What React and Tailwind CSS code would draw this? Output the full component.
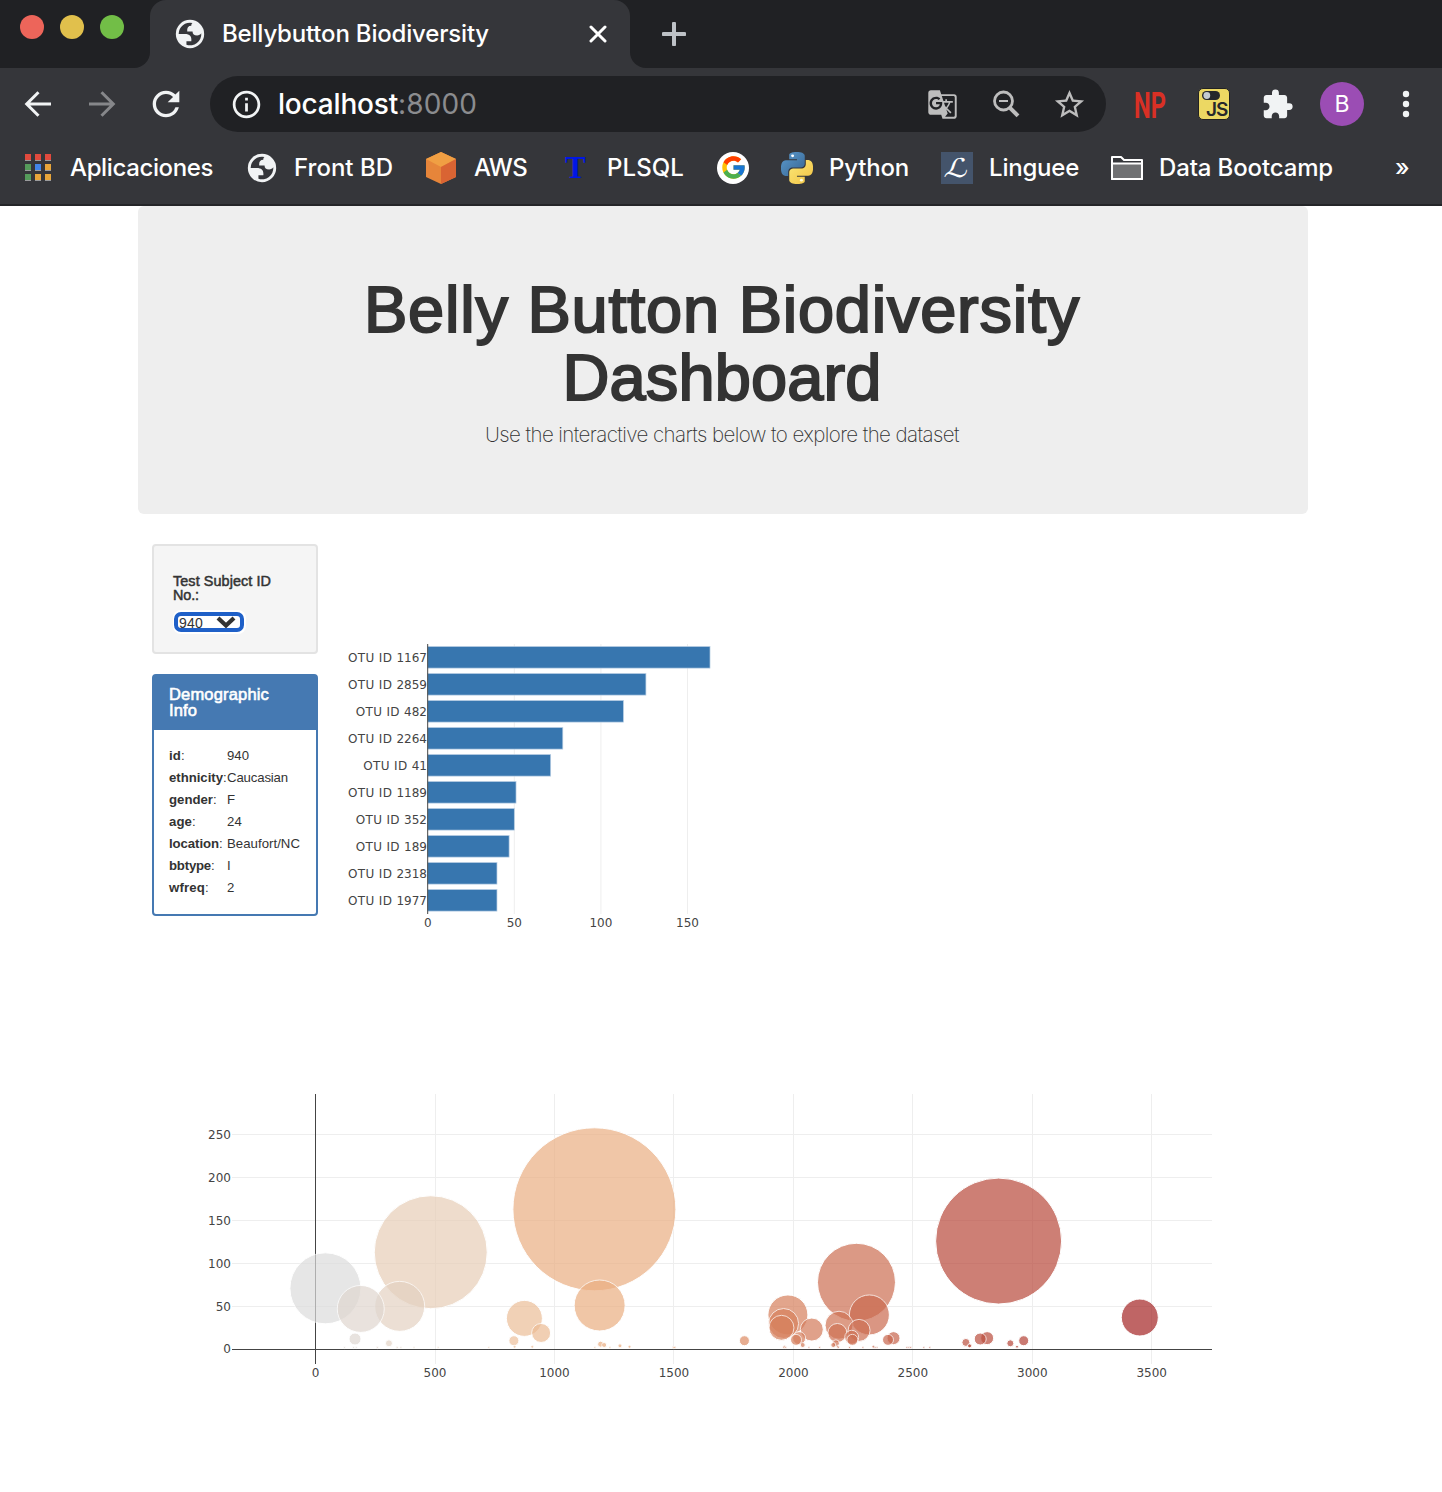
import React, { useLayoutEffect, useRef } from "react";
import {
  MdGTranslate,
  MdStarBorder,
  MdExtension,
  MdRefresh,
  MdInfoOutline,
} from "react-icons/md";
import { FcGoogle } from "react-icons/fc";

/* Text whose tracking is adjusted so that it fills the given width. */
function Fit({ w, className = "", children }) {
  const ref = useRef(null);
  useLayoutEffect(() => {
    const el = ref.current;
    el.style.letterSpacing = "0px";
    const natural = el.getBoundingClientRect().width;
    el.style.letterSpacing = (w - natural) / String(children).length + "px";
  }, [w, children]);
  return (
    <span ref={ref} className={"inline-block whitespace-nowrap " + className}>
      {children}
    </span>
  );
}

function Globe() {
  return (
    <svg width="34" height="34" viewBox="0 0 24 24" className="shrink-0">
      <circle cx="12" cy="12" r="10" fill="#f1f3f4" />
      <path
        d="M4 12h4.4c3.407.022 4.922 1.73 4.543 5.127H9.488v2.47a8.004 8.004 0 0 0 10.498-8.083C19.327 12.504 18.332 13 17 13c-2.137 0-3.206-.916-3.206-2.75h-3.748c-.274-2.728.683-4.092 2.87-4.092 0-.975.327-1.597.811-1.97A8.004 8.004 0 0 0 4 12z"
        fill="#35363a"
      />
    </svg>
  );
}

function TabStrip() {
  return (
    <div className="flex h-[68px] bg-[#35363a]">
      <div className="flex w-[150px] gap-4 rounded-br-2xl bg-[#202124] pl-5 pt-[15px]">
        <span className="size-6 rounded-full bg-[#ed655a]" />
        <span className="size-6 rounded-full bg-[#e1c04c]" />
        <span className="size-6 rounded-full bg-[#72be47]" />
      </div>
      <div className="w-[480px] bg-[linear-gradient(#202124_50%,#35363a_50%)]">
        <div className="flex h-full items-center rounded-t-2xl bg-[#35363a] pl-[23px]">
          <Globe />
          <Fit w={267} className="ml-[15px] text-[24px] font-medium text-white">
            Bellybutton Biodiversity
          </Fit>
          <svg width="18" height="18" viewBox="0 0 18 18" className="ml-[100px]">
            <path d="M2 2L16 16M16 2L2 16" stroke="#fff" strokeWidth="3" strokeLinecap="round" />
          </svg>
        </div>
      </div>
      <div className="flex flex-1 items-center rounded-bl-2xl bg-[#202124] pl-8">
        <svg width="24" height="24" viewBox="0 0 24 24">
          <path d="M12 1.5V22.5M1.5 12H22.5" stroke="#bdc1c6" strokeWidth="4" strokeLinecap="round" />
        </svg>
      </div>
    </div>
  );
}

function Toolbar() {
  return (
    <div className="flex h-[72px] items-center bg-[#35363a]">
      <svg width="28" height="28" viewBox="0 0 28 28" className="ml-6" fill="none" stroke="#f1f3f4" strokeWidth="3">
        <path d="M27 14H3M14.5 2.2L2.7 14L14.5 25.8" />
      </svg>
      <svg width="28" height="28" viewBox="0 0 28 28" className="ml-9" fill="none" stroke="#86878a" strokeWidth="3">
        <path d="M1 14H25M13.5 2.2L25.3 14L13.5 25.8" />
      </svg>
      <MdRefresh className="ml-[30px] size-10 text-[#f1f3f4]" />
      <div className="ml-6 flex h-14 w-[896px] items-center rounded-full bg-[#202124] pl-5">
        <MdInfoOutline className="size-[33px] text-[#f1f3f4]" />
        <Fit w={120} className="ml-[15px] text-[28px] font-medium leading-8 text-white">localhost</Fit>
        <Fit w={79} className="text-[28px] leading-8 text-[#8b8c8f]">:8000</Fit>
        <MdGTranslate className="ml-[450px] size-[31px] text-[#bdbdbd]" />
        <svg width="28" height="28" viewBox="0 0 28 28" className="ml-[34px]" fill="none" stroke="#bdbdbd">
          <circle cx="11.5" cy="11" r="9" strokeWidth="2.8" />
          <path d="M18 17.8L26 25.8" strokeWidth="4" />
          <path d="M7 11H16" strokeWidth="2" />
        </svg>
        <MdStarBorder className="ml-[32px] size-[35px] text-[#bdbdbd]" />
      </div>
      <span className="ml-[28px] flex w-8 justify-center">
        <span className="translate-y-px scale-x-[.64] font-['Roboto'] text-[37px] font-bold leading-none text-[#d93025]">NP</span>
      </span>
      <div className="ml-8 flex h-8 w-8 flex-col rounded-[5px] border border-[#222] bg-[#ecd863] pl-[3px] pt-[2px]">
        <svg width="18" height="9" viewBox="0 0 18 9" className="shrink-0">
          <rect width="18" height="9" rx="4.5" fill="#26282b" />
          <circle cx="4.8" cy="4.5" r="3.4" fill="#c4cbd0" />
        </svg>
        <span className="pl-[4px] text-[19px] font-semibold leading-[19px] tracking-[-1px] text-[#26282b]">JS</span>
      </div>
      <MdExtension className="ml-[31px] size-[33px] text-[#f1f3f4]" />
      <span className="ml-[26px] flex size-11 items-center justify-center rounded-full bg-[#9b4db4] text-[23px] text-white">
        B
      </span>
      <svg width="8" height="28" viewBox="0 0 8 28" className="ml-[38px] fill-[#f1f3f4]">
        <circle cx="4" cy="4" r="3.2" />
        <circle cx="4" cy="14" r="3.2" />
        <circle cx="4" cy="24" r="3.2" />
      </svg>
    </div>
  );
}

const SNAKE =
  "M14.25.18l.9.2.73.26.59.3.45.32.34.34.25.34.16.33.1.3.04.26.02.2-.01.13V8.5l-.05.63-.13.55-.21.46-.26.38-.3.31-.33.25-.35.19-.35.14-.33.1-.3.07-.26.04-.21.02H8.77l-.69.05-.59.14-.5.22-.41.27-.33.32-.27.35-.2.36-.15.37-.1.35-.07.32-.04.27-.02.21v3.06H3.17l-.21-.03-.28-.07-.32-.12-.35-.18-.36-.26-.36-.36-.35-.46-.32-.59-.28-.73-.21-.88-.14-1.05-.05-1.23.06-1.22.16-1.04.24-.87.32-.71.36-.57.4-.44.42-.33.42-.24.4-.16.36-.1.32-.05.24-.01h.16l.06.01h8.16v-.83H6.18l-.01-2.75-.02-.37.05-.34.11-.31.17-.28.25-.26.31-.23.38-.2.44-.18.51-.15.58-.12.64-.1.71-.06.77-.04.84-.02 1.27.05z";

function PythonLogo() {
  return (
    <svg width="32" height="32" viewBox="0 0 24 24">
      <defs>
        <linearGradient id="pyBlue" x1="0" y1="0" x2="1" y2="1">
          <stop offset="0" stopColor="#5b9bd0" />
          <stop offset="1" stopColor="#37648f" />
        </linearGradient>
        <linearGradient id="pyYellow" x1="1" y1="1" x2="0" y2="0">
          <stop offset="0" stopColor="#fbe878" />
          <stop offset="1" stopColor="#f2c343" />
        </linearGradient>
      </defs>
      <path d={SNAKE} fill="url(#pyBlue)" />
      <path d={SNAKE} fill="url(#pyYellow)" transform="rotate(180 12 12)" />
      <circle cx="8.7" cy="2.9" r="1.1" fill="#fff" />
      <circle cx="15.3" cy="21.1" r="1.1" fill="#fffbe0" />
    </svg>
  );
}

const APP_TILES = [
  "#e14a3d", "#e14a3d", "#e14a3d",
  "#559b5b", "#4285e8", "#e8a53a",
  "#559b5b", "#e8a53a", "#e8a53a",
];

function Bookmarks() {
  return (
    <div className="flex h-[66px] items-center border-b-2 border-[#242528] bg-[#35363a] pb-[9px] text-[24px] font-medium text-white">
      <svg width="26" height="28" viewBox="0 0 26 28" className="ml-[25px]">
        {APP_TILES.map((c, i) => (
          <g key={i}>
            <rect x={(i % 3) * 10} y={Math.floor(i / 3) * 10} width="6" height="7" fill="#9a9b9d" />
            <rect x={(i % 3) * 10} y={Math.floor(i / 3) * 10} width="6" height="6" fill={c} />
          </g>
        ))}
      </svg>
      <Fit w={143} className="ml-[19px]">Aplicaciones</Fit>
      <div className="ml-[32px]"><Globe /></div>
      <Fit w={99} className="ml-[15px]">Front BD</Fit>
      <svg width="32" height="32" viewBox="0 0 32 32" className="ml-[32px]">
        <path d="M16 0L31 7V25L16 32L1 25V7Z" fill="#e6853a" />
        <path d="M16 0L31 7L16 15L1 7Z" fill="#f09f43" />
        <path d="M31 7V25L16 32V15Z" fill="#d96433" />
      </svg>
      <Fit w={53} className="ml-[17px]">AWS</Fit>
      <span className="ml-[38px] w-[20px] font-['Liberation_Serif'] text-[31px] font-bold leading-none text-[#0017e6]">T</span>
      <Fit w={77} className="ml-[22px]">PLSQL</Fit>
      <span className="ml-[33px] flex size-8 items-center justify-center rounded-full bg-white">
        <FcGoogle className="size-[27px]" />
      </span>
      <div className="ml-[32px]"><PythonLogo /></div>
      <Fit w={80} className="ml-[16px]">Python</Fit>
      <span className="ml-[32px] flex size-8 items-center justify-center bg-[#44546b] font-['DejaVu_Sans'] text-[26px] font-normal leading-8">
        <span className="-skew-x-12 scale-x-125">ℒ</span>
      </span>
      <Fit w={90} className="ml-[16px]">Linguee</Fit>
      <svg width="32" height="26" viewBox="0 0 32 26" className="ml-[32px]" strokeLinejoin="round">
        <path d="M1 24V2H10L13 5H31V24Z" fill="#35363a" stroke="#fff" strokeWidth="2" />
        <path d="M1 8.5H31V24H1Z" fill="#707173" stroke="#fff" strokeWidth="2" />
      </svg>
      <Fit w={174} className="ml-[16px]">Data Bootcamp</Fit>
      <span className="ml-[62px] text-[24px]">»</span>
    </div>
  );
}

function Jumbotron() {
  return (
    <div className="ml-[138px] h-[308px] w-[1170px] rounded-md bg-[#eee] pt-[70px] text-center text-[#333]">
      <h1 className="-translate-x-px text-[65px] leading-[68px] [-webkit-text-stroke:2px_#333]">
        <Fit w={716}>Belly Button Biodiversity</Fit>
        <br />
        <Fit w={319}>Dashboard</Fit>
      </h1>
      <p className="mt-[8px] -translate-x-px font-['Inter'] text-[20.5px] font-extralight leading-[30px]">
        <Fit w={474}>Use the interactive charts below to explore the dataset</Fit>
      </p>
    </div>
  );
}

const INFO = [
  ["id", "940", 12],
  ["ethnicity", "Caucasian", 54],
  ["gender", "F", 44],
  ["age", "24", 23],
  ["location", "Beaufort/NC", 50],
  ["bbtype", "I", 42],
  ["wfreq", "2", 36],
];
const VALUE_WIDTHS = { Caucasian: 61, "Beaufort/NC": 73, 940: 22, 24: 15, F: 8, I: 4, 2: 7 };

function Sidebar() {
  return (
    <aside className="w-[166px] text-[#333]">
      <div className="h-[110px] rounded border-2 border-[#e3e3e3] bg-[#f5f5f5] pl-[19px] pt-[28px]">
        <h5 className="text-[14.4px] leading-[14px] [-webkit-text-stroke:0.5px_#333]">
          <Fit w={98}>Test Subject ID</Fit>
          <br />
          <Fit w={26}>No.:</Fit>
        </h5>
        <div className="mt-[8px] flex w-[73px] rounded-[8px] bg-white p-[2px] pl-[1px]">
          <div className="flex h-5 w-full items-center overflow-hidden rounded-[7px] border-4 border-[#1f60c8] bg-white">
            <Fit w={24} className="relative left-px top-px text-[14px] leading-[14px]">940</Fit>
            <svg width="20" height="12" viewBox="0 0 20 12" className="ml-[14px] shrink-0">
              <path d="M2 2L10 9.5L18 2" fill="none" stroke="#333" strokeWidth="4.2" />
            </svg>
          </div>
        </div>
      </div>
      <div className="mt-5 h-[242px] rounded border-2 border-[#4579b2] bg-white">
        <h3 className="h-[54px] bg-[#4579b2] pl-[15px] pt-[10px] text-[16.5px] leading-[16px] text-white [-webkit-text-stroke:0.6px_#fff]">
          <Fit w={100}>Demographic</Fit>
          <br />
          <Fit w={28}>Info</Fit>
        </h3>
        <div className="pl-[15px] pt-[15px] text-[13.2px] leading-[22px]">
          {INFO.map(([k, v, w]) => (
            <div key={k} className="flex h-[22px]">
              <div className="flex w-[58px] shrink-0">
                <Fit w={w} className="font-bold">{k}</Fit>
                <span>:</span>
              </div>
              <Fit w={VALUE_WIDTHS[v]}>{v}</Fit>
            </div>
          ))}
        </div>
      </div>
    </aside>
  );
}

const IDS = [
  1167, 2859, 482, 2264, 41, 1189, 352, 189, 2318, 1977, 3450, 874, 1959, 2191, 1950, 2077, 2275, 944, 2184, 2244,
  2024, 2419, 2811, 165, 2782, 2247, 2011, 2396, 830, 2964, 1795, 2722, 307, 2178, 2908, 1193, 2167, 1208, 2039, 1274,
  2739, 2737, 1314, 1962, 2186, 2335, 2936, 907, 833, 2483, 2475, 2491, 2291, 159, 2571, 2350, 2342, 2546, 725, 170,
  1505, 513, 259, 1169, 258, 1232, 1497, 1498, 1503, 412, 2235, 1960, 1968, 121, 2065, 340, 2110, 2188, 357, 342,
];
const VALUES = [
  163, 126, 113, 78, 71, 51, 50, 47, 40, 40, 37, 36, 30, 28, 25, 23, 22, 19, 19, 14, 13, 13, 13, 12, 12, 11, 11, 11,
  10, 10, 10, 8, 7, 7, 7, 6, 5, 5, 5, 4, 4, 4, 3, 3, 3, 3, 3, 3, 3,
];
const valueAt = (i) => VALUES[i] ?? 2;

function BarChart() {
  const x = (v) => 427.7 + v * 1.732;
  return (
    <svg width="400" height="450" viewBox="333 544 400 450" className="ml-[15px] font-['DejaVu_Sans'] text-[12px]">
      {[50, 100, 150].map((t) => (
        <line key={t} x1={x(t)} x2={x(t)} y1="644" y2="914" stroke="#eee" />
      ))}
      {VALUES.slice(0, 10).map((v, i) => (
        <g key={i}>
          <rect x="427.7" y={646.5 + i * 27} width={v * 1.732} height="21.6" fill="#3776af" stroke="#b9cfe4" strokeWidth="0.7" />
          <text x="427" y={662 + i * 27} textAnchor="end" fill="#444">
            <tspan letterSpacing="0.35">{"OTU ID "}</tspan>
            <tspan>{IDS[i]}</tspan>
          </text>
        </g>
      ))}
      <line x1="427.7" x2="427.7" y1="644" y2="914" stroke="#444" />
      {[0, 50, 100, 150].map((t) => (
        <text key={t} x={x(t)} y="927" textAnchor="middle" fill="#444">{t}</text>
      ))}
    </svg>
  );
}

const STOPS = [
  [0, [220, 220, 220]],
  [0.2, [237, 198, 163]],
  [0.4, [234, 163, 114]],
  [1, [164, 37, 37]],
];

function scaleColor(id) {
  const f = (id - 41) / (3450 - 41);
  let k = 1;
  while (f > STOPS[k][0]) k++;
  const [a, ca] = STOPS[k - 1];
  const [b, cb] = STOPS[k];
  const t = (f - a) / (b - a);
  return "rgb(" + ca.map((c, i) => Math.round(c + (cb[i] - c) * t)).join(",") + ")";
}

function BubbleChart() {
  const x = (v) => 315.6 + v * 0.2389;
  const y = (v) => 1349.3 - v * 0.859;
  const snap = (n) => Math.floor(n) + 0.5;
  return (
    <svg width="1170" height="498" viewBox="138 994 1170 498" className="block font-['DejaVu_Sans'] text-[12px]">
      {[500, 1000, 1500, 2000, 2500, 3000, 3500].map((t) => (
        <line key={t} x1={snap(x(t))} x2={snap(x(t))} y1="1094" y2="1364" stroke="#eee" />
      ))}
      {[50, 100, 150, 200, 250].map((t) => (
        <line key={t} x1="232" x2="1212" y1={snap(y(t))} y2={snap(y(t))} stroke="#eee" />
      ))}
      <line x1="315.5" x2="315.5" y1="1094" y2="1364" stroke="#444" />
      <line x1="232" x2="1212" y1="1349.5" y2="1349.5" stroke="#444" />
      {IDS.map((id, i) => (
        <circle
          key={id}
          cx={x(id)}
          cy={y(valueAt(i))}
          r={valueAt(i) / 2}
          fill={scaleColor(id)}
          stroke="#fff"
          opacity="0.7"
        />
      ))}
      {[0, 500, 1000, 1500, 2000, 2500, 3000, 3500].map((t) => (
        <text key={t} x={x(t)} y="1377" textAnchor="middle" fill="#444">{t}</text>
      ))}
      {[0, 50, 100, 150, 200, 250].map((t) => (
        <text key={t} x="231" y={t === 0 ? 1353 : Math.floor(y(t)) + 5} textAnchor="end" fill="#444">{t}</text>
      ))}
    </svg>
  );
}

export default function App() {
  return (
    <div className="h-[1492px] w-[1442px] overflow-hidden bg-white font-['Liberation_Sans',sans-serif]">
      <header className="font-['Inter',sans-serif]">
        <TabStrip />
        <Toolbar />
        <Bookmarks />
      </header>
      <main>
        <Jumbotron />
        <div className="flex h-[480px] pl-[152px] pt-[30px]">
          <Sidebar />
          <BarChart />
        </div>
        <div className="pl-[138px]">
          <BubbleChart />
        </div>
      </main>
    </div>
  );
}
